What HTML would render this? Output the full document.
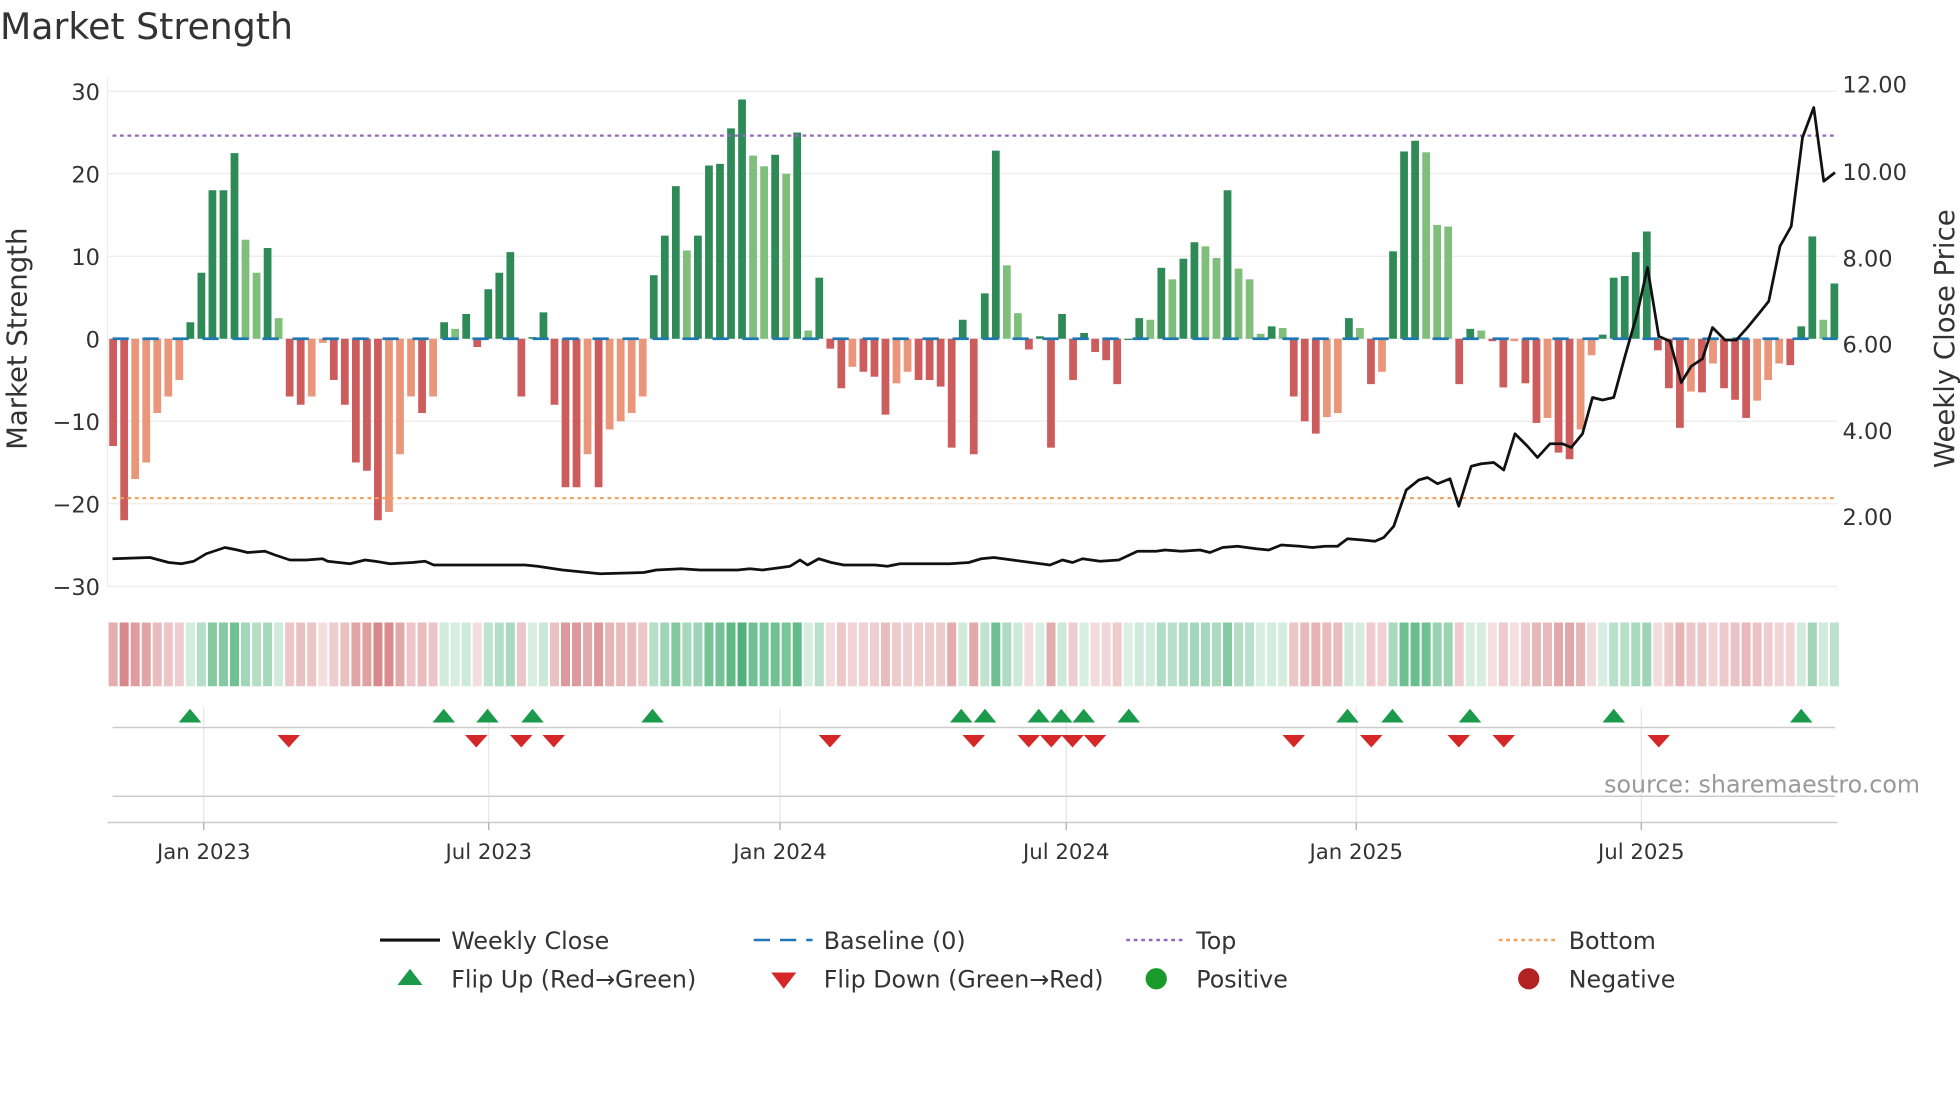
<!DOCTYPE html>
<html><head><meta charset="utf-8"><style>
html,body{margin:0;padding:0;background:#fff;width:1960px;height:1102px;overflow:hidden}
svg{display:block}
text{font-family:"DejaVu Sans","Liberation Sans",sans-serif;fill:#333}
</style></head><body>
<svg id="s" width="1960" height="1102" viewBox="0 0 1568 881.6" xmlns="http://www.w3.org/2000/svg">
<text x="0" y="31" font-size="29">Market Strength</text>
<g id="grid"></g>
<g id="bars"></g>
<g id="heat"></g>
<g id="marks"></g>
<g id="axes"></g>
</svg>
<script>
const NS="http://www.w3.org/2000/svg";
function el(p,t,a,txt){const e=document.createElementNS(NS,t);for(const k in a)e.setAttribute(k,a[k]);if(txt!==undefined)e.textContent=txt;document.getElementById(p).appendChild(e);return e;}
const vals=[-13,-22,-17,-15,-9,-7,-5,2,8,18,18,22.5,12,8,11,2.5,-7,-8,-7,-0.5,-5,-8,-15,-16,-22,-21,-14,-7,-9,-7,2,1.2,3,-1,6,8,10.5,-7,0.2,3.2,-8,-18,-18,-14,-18,-11,-10,-9,-7,7.7,12.5,18.5,10.7,12.5,21,21.2,25.5,29,22.2,20.9,22.3,20,25,1,7.4,-1.2,-6,-3.4,-4,-4.6,-9.2,-5.4,-4,-5,-5,-5.8,-13.2,2.3,-14,5.5,22.8,8.9,3.1,-1.3,0.3,-13.2,3,-5,0.7,-1.6,-2.6,-5.5,0,2.5,2.3,8.6,7.2,9.7,11.7,11.2,9.8,18,8.5,7.2,0.6,1.5,1.3,-7,-10,-11.5,-9.5,-9,2.5,1.3,-5.5,-4,10.6,22.7,24,22.6,13.8,13.6,-5.5,1.2,1,-0.3,-5.9,-0.3,-5.4,-10.2,-9.6,-13.8,-14.6,-11,-2,0.5,7.4,7.6,10.5,13,-1.4,-6,-10.8,-6.4,-6.5,-3,-6,-7.4,-9.6,-7.5,-5,-3,-3.2,1.5,12.4,2.3,6.7];
const x0=90.5,dx=(1467.5-90.5)/(vals.length-1),bw=6.2;
const yv=v=>271-v*6.6;
[30,20,10,0,-10,-20,-30].forEach(v=>{el('grid','line',{x1:86,x2:1470,y1:yv(v),y2:yv(v),stroke:'#ececec','stroke-width':1});
 el('axes','text',{x:80,y:yv(v)+7,'font-size':18,'text-anchor':'end'},(v<0?'\u2212'+(-v):''+v));});
el('grid','line',{x1:86,x2:86,y1:62,y2:470,stroke:'#ececec'});
[[12,67],[10,137],[8,206],[6,275],[4,344],[2,413]].forEach(([v,y])=>el('axes','text',{x:1474,y:y+7,'font-size':18},v.toFixed(2)));
const ticks=[[163,'Jan 2023'],[391,'Jul 2023'],[624,'Jan 2024'],[853,'Jul 2024'],[1085,'Jan 2025'],[1313,'Jul 2025']];
ticks.forEach(([x,t])=>{el('grid','line',{x1:x,x2:x,y1:566,y2:658,stroke:'#e6e6e6'});
 el('axes','line',{x1:x,x2:x,y1:658,y2:664,stroke:'#aaa'});
 el('axes','text',{x:x,y:687,'font-size':17,'text-anchor':'middle'},t);});
el('grid','line',{x1:90,x2:1468,y1:582,y2:582,stroke:'#ccc','stroke-width':1.2});
el('grid','line',{x1:90,x2:1468,y1:637,y2:637,stroke:'#ccc','stroke-width':1.2});
el('grid','line',{x1:86,x2:1470,y1:658,y2:658,stroke:'#ccc','stroke-width':1.2});
vals.forEach((v,i)=>{const p=i?vals[i-1]:0;let c;
 if(v>=0)c=(v>=p)?'#2e8b57':'#7fbf7b';else c=(v<=p)?'#cd5c5c':'#e9967a';
 const x=x0+i*dx-bw/2;const y=v>=0?yv(v):271;const h=Math.max(Math.abs(v*6.6),1);
 el('bars','rect',{x:x,y:y,width:bw,height:h,fill:c});
 const a=Math.min(1,0.2+Math.abs(v)/30*0.8);
 el('heat','rect',{x:x0+i*dx-3.6,y:498,width:7.2,height:51,fill:v>=0?'#2ca25f':'#c44e52','fill-opacity':a*0.85});
});
el('bars','line',{x1:90,x2:1470,y1:271,y2:271,stroke:'#1f77b4','stroke-width':2.2,'stroke-dasharray':'13,11'});
el('bars','line',{x1:90,x2:1470,y1:108.5,y2:108.5,stroke:'#9467bd','stroke-width':1.8,'stroke-dasharray':'3,3'});
el('bars','line',{x1:90,x2:1470,y1:398.5,y2:398.5,stroke:'#f4a259','stroke-width':1.8,'stroke-dasharray':'3,3'});
const pr=[[90,447],[120,446],[135,450],[145,451],[155,449],[165,443],[180,438],[190,440],[198,442],[212,441],[220,444],[232,448],[245,448],[258,447],[262,449],[280,451],[292,448],[300,449],[312,451],[330,450],[340,449],[347,452],[370,452],[420,452],[430,453],[450,456],[480,459],[515,458],[525,456],[545,455],[560,456],[590,456],[600,455],[610,456],[625,454],[632,453],[640,448],[646,452],[655,447],[665,450],[675,452],[700,452],[710,453],[720,451],[760,451],[775,450],[785,447],[795,446],[810,448],[840,452],[850,448],[858,450],[866,447],[880,449],[895,448],[910,441],[925,441],[932,440],[945,441],[960,440],[968,442],[978,438],[990,437],[1005,439],[1015,440],[1025,436],[1040,437],[1050,438],[1060,437],[1070,437],[1078,431],[1090,432],[1100,433],[1107,430],[1115,421],[1125,392],[1135,384],[1142,382],[1150,387],[1160,383],[1167,405],[1177,373],[1185,371],[1195,370],[1203,376],[1212,347],[1222,357],[1230,366],[1240,355],[1250,355],[1257,358],[1266,347],[1274,318],[1282,320],[1291,318],[1300,285],[1310,250],[1318,214],[1327,269],[1336,273],[1345,306],[1353,293],[1362,287],[1370,262],[1380,272],[1389,272],[1398,262],[1407,251],[1415,241],[1424,197],[1433,181],[1442,110],[1451,86],[1459,145],[1468,138]];
el('bars','polyline',{points:pr.map(p=>p.join(',')).join(' '),fill:'none',stroke:'#111','stroke-width':2.2,'stroke-linejoin':'round'});
[152,355,390,426,522,769,788,831,849,867,903,1078,1114,1176,1291,1441].forEach(x=>el('marks','polygon',{points:`${x-9},578 ${x+9},578 ${x},567`,fill:'#1a9a4a'}));
[231,381,417,443,664,779,823,841,858,876,1035,1097,1167,1203,1327].forEach(x=>el('marks','polygon',{points:`${x-9},588 ${x+9},588 ${x},598`,fill:'#d62728'}));
el('axes','text',{x:1536,y:634,'font-size':19,'text-anchor':'end',style:'fill:#999'},'source: sharemaestro.com');
el('axes','text',{x:0,y:0,'font-size':22,'text-anchor':'middle',transform:'translate(21,271) rotate(-90)'},'Market Strength');
el('axes','text',{x:0,y:0,'font-size':22,'text-anchor':'middle',transform:'translate(1563,271) rotate(-90)'},'Weekly Close Price');
function L(x,y,t){el('axes','text',{x:x,y:y+7,'font-size':19},t);}
el('axes','line',{x1:304,x2:352,y1:752,y2:752,stroke:'#111','stroke-width':2.5});L(361,752,'Weekly Close');
el('axes','line',{x1:603,x2:650,y1:752,y2:752,stroke:'#1f77b4','stroke-width':2,'stroke-dasharray':'13,8'});L(659,752,'Baseline (0)');
el('axes','line',{x1:901,x2:947,y1:752,y2:752,stroke:'#9467bd','stroke-width':2,'stroke-dasharray':'3,3'});L(957,752,'Top');
el('axes','line',{x1:1199,x2:1245,y1:752,y2:752,stroke:'#f4a259','stroke-width':2,'stroke-dasharray':'3,3'});L(1255,752,'Bottom');
el('axes','polygon',{points:'318,788 338,788 328,775',fill:'#1a9a4a'});L(361,783,'Flip Up (Red\u2192Green)');
el('axes','polygon',{points:'617,778 637,778 627,791',fill:'#d62728'});L(659,783,'Flip Down (Green\u2192Red)');
el('axes','circle',{cx:925,cy:783,r:8.5,fill:'#1a9a2a'});L(957,783,'Positive');
el('axes','circle',{cx:1223,cy:783,r:8.5,fill:'#b22222'});L(1255,783,'Negative');
</script>
</body></html>
